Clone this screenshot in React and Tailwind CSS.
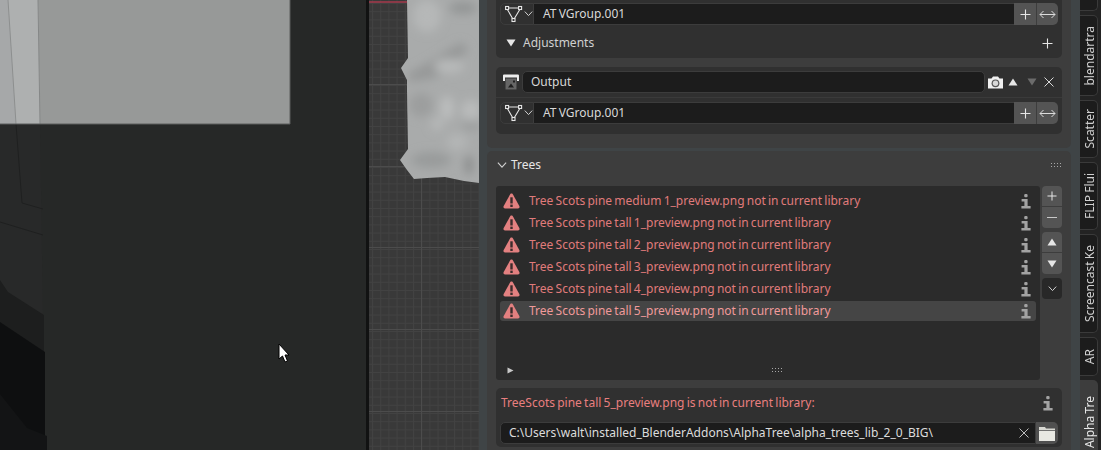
import React from 'react';

const rows = [
  'Tree Scots pine medium 1_preview.png not in current library',
  'Tree Scots pine tall 1_preview.png not in current library',
  'Tree Scots pine tall 2_preview.png not in current library',
  'Tree Scots pine tall 3_preview.png not in current library',
  'Tree Scots pine tall 4_preview.png not in current library',
  'Tree Scots pine tall 5_preview.png not in current library',
];

const tabs = [
  { label: 'blendartra', h: 'h-[81px]' },
  { label: 'Scatter', h: 'h-[58px]' },
  { label: 'FLIP Flui', h: 'h-[68px]' },
  { label: 'Screencast Ke', h: 'h-[99px]' },
  { label: 'AR', h: 'h-[39px]' },
];

const WarnIcon = () => (
  <svg width="17" height="16" viewBox="0 0 17 16">
    <path d="M8.5 .6 C9.3 .6 9.7 1 10.1 1.7 L16.3 13 C16.9 14.2 16.3 15.4 15 15.4 L2 15.4 C.7 15.4 .1 14.2 .7 13 L6.9 1.7 C7.3 1 7.7 .6 8.5 .6 Z" fill="#e38080" />
    <rect x="7.3" y="4.3" width="2.4" height="6.2" fill="#3a2c2c" />
    <rect x="7.3" y="11.6" width="2.4" height="2.4" fill="#3a2c2c" />
  </svg>
);

const InfoIcon = ({ className = '' }) => (
  <svg width="10" height="15" viewBox="0 0 10 15" className={className}>
    <rect x="3.2" y="0" width="3.4" height="3.2" rx="1.2" fill="#a3a3a3" />
    <path d="M.6 5 H6.6 V12 H9.6 V14.6 H.4 V12 H3.4 V7.4 H.6 Z" fill="#a3a3a3" />
  </svg>
);

const VGroupIcon = () => (
  <svg width="18" height="18" viewBox="0 0 18 18" fill="none" stroke="#e6e6e6" strokeWidth="1.1">
    <rect x=".6" y="1.5" width="3" height="3" />
    <rect x="13.6" y="1.5" width="3" height="3" />
    <rect x="7" y="13.5" width="3" height="3" />
    <path d="M3.6 3 H13.6 M2.4 4.5 L7.6 13.5 M14.8 4.5 L9.4 13.5" />
  </svg>
);

const Chevron = ({ color = '#d0d0d0', size = 9 }) => (
  <svg width={size} height={size * 0.6} viewBox="0 0 9 5.4" fill="none" stroke={color} strokeWidth="1">
    <path d="M.8 .6 L4.5 4.6 L8.2 .6" />
  </svg>
);

const Plus = ({ size = 11 }) => (
  <svg width={size} height={size} viewBox="0 0 11 11" stroke="#e6e6e6" strokeWidth="1.1">
    <path d="M5.5 .5 V10.5 M.5 5.5 H10.5" />
  </svg>
);

const Arrows = () => (
  <svg width="17" height="9" viewBox="0 0 17 9" fill="none" stroke="#dcdcdc" strokeWidth="1">
    <path d="M1 4.5 H16 M4.5 1 L1 4.5 L4.5 8 M12.5 1 L16 4.5 L12.5 8" />
  </svg>
);

const Tri = ({ down, color = '#e6e6e6' }) => (
  <svg width="10" height="8" viewBox="0 0 10 8">
    <path d={down ? 'M.5 .5 H9.5 L5 7.5 Z' : 'M5 .5 L9.5 7.5 H.5 Z'} fill={color} />
  </svg>
);

const Close = ({ size = 10, color = '#d8d8d8' }) => (
  <svg width={size} height={size} viewBox="0 0 10 10" stroke={color} strokeWidth="1">
    <path d="M.5 .5 L9.5 9.5 M9.5 .5 L.5 9.5" />
  </svg>
);

const Grip = () => (
  <svg width="11" height="5" viewBox="0 0 11 5" fill="#a8a8a8">
    {[0, 3, 6, 9].map((x) => (
      <g key={x}>
        <rect x={x} y="0" width="1" height="1" />
        <rect x={x} y="3" width="1" height="1" />
      </g>
    ))}
  </svg>
);

const CameraIcon = () => (
  <svg width="15" height="13" viewBox="0 0 15 13">
    <path d="M0 2.5 H3.5 L5 .5 H10 L11.5 2.5 H15 V12.5 H0 Z" fill="#f0f0f0" />
    <circle cx="7.5" cy="7.3" r="3.9" fill="#555" />
    <circle cx="7.5" cy="7.3" r="2.7" fill="#d8d8d8" />
  </svg>
);

const OutputIcon = () => (
  <svg width="16" height="16" viewBox="0 0 16 16">
    <path d="M0 1.5 Q0 .5 1 .5 H15 Q16 .5 16 1.5 V7 H14 V3.5 H2 V7 H0 Z" fill="#eeeeee" />
    <rect x="2.5" y="4.5" width="11" height="11" fill="#666666" />
    <path d="M5 13.5 L8 9.5 L11 13.5 Z" fill="#1f1f1f" />
    <rect x="10" y="6.5" width="2" height="2" fill="#1f1f1f" />
  </svg>
);

const FolderIcon = () => (
  <svg width="16" height="15" viewBox="0 0 16 15">
    <path d="M0 1 H6 L7 2.5 H16 V4.2 H0 Z" fill="#d8d8d2" />
    <rect x="0" y="5" width="16" height="10" fill="#e8e8e2" />
  </svg>
);

// one object picker row, same in both vertex group slots
const GroupRow = () => (
  <div className="flex h-[22px] items-stretch text-[#d8d8d8]">
    <div className="flex w-[34px] items-center gap-[1px] rounded-l-[5px] border border-[#3c3c3c] bg-[#303030] pl-[4px]">
      <VGroupIcon />
      <Chevron />
    </div>
    <div className="flex flex-1 items-center border-y border-[#3c3c3c] bg-[#1c1c1c] pl-[9px]">AT VGroup.001</div>
    <div className="flex w-[22px] items-center justify-center bg-[#545454]"><Plus /></div>
    <div className="flex w-[22px] items-center justify-center rounded-r-[5px] border-l border-[#3d3d3d] bg-[#545454]"><Arrows /></div>
  </div>
);

const ListRow = ({ text, active }) => (
  <div className={`flex shrink-0 items-center ${active ? 'my-[1px] h-[20px] rounded-[3px] bg-[#454545]' : 'h-[22px]'}`}>
    <div className="ml-[3px] mr-[9px] flex w-[17px] justify-center"><WarnIcon /></div>
    <span className={`flex-1 ${active ? 'text-[#f09a9a]' : 'text-[#e07b7b]'}`}>{text}</span>
    <InfoIcon className="mr-[5px]" />
  </div>
);

const SideButton = ({ children, top, bottom, dark }) => (
  <div className={`flex h-[21px] w-[20px] items-center justify-center ${dark ? 'bg-[#282828]' : 'bg-[#545454]'} ${top ? 'rounded-t-[4px]' : ''} ${bottom ? 'rounded-b-[4px]' : ''} ${top && !dark ? 'border-b border-[#3d3d3d]' : ''}`}>
    {children}
  </div>
);

const Viewport = () => (
  <svg width="366" height="450" viewBox="0 0 366 450" className="shrink-0">
    <rect width="366" height="450" fill="#262827" />
    <path d="M0 124 H40 L45 450 H0 Z" fill="#282929" />
    <path d="M0 280 L8 292 L44 315 V450 H0 Z" fill="#1d1e1e" />
    <path d="M0 322 L45 352 V450 H0 Z" fill="#0e0f10" />
    <path d="M0 394 L27 428 L47 436 V450 H0 Z" fill="#131415" />
    <rect width="290" height="124" fill="#979998" />
    <path d="M0 0 H38 L40 124 H0 Z" fill="#a6a8a9" />
    <path d="M8 0 H38 L40 124 H16 Z" fill="#aeb0b0" />
    <path d="M8 0 L16 124" stroke="#8d8f8f" strokeWidth="1" />
    <path d="M16 124 L22 203 L43 209 M0 222 L43 235" fill="none" stroke="#1f2020" strokeWidth="1" />
    <path d="M38 0 L40 124" stroke="#868888" strokeWidth="1" />
    <path d="M290 0 V124 H0" fill="none" stroke="#5a5c5c" strokeWidth="1" />
    <path d="M279 344 V359 L282.5 356 L285 362 L287.5 361 L285 355 L289 355 Z" fill="#fff" stroke="#000" strokeWidth="1" />
  </svg>
);

const GridView = () => (
  <svg width="110" height="450" viewBox="0 0 110 450" className="shrink-0">
    <defs>
      <pattern id="fine" width="8.2" height="8.2" patternUnits="userSpaceOnUse" x="3" y="3">
        <rect width="8.2" height="8.2" fill="#393939" />
        <path d="M0 .5 H8.2 M.5 0 V8.2" stroke="#424242" strokeWidth="1" />
      </pattern>
      <filter id="soft" x="-30%" y="-30%" width="160%" height="160%">
        <feGaussianBlur stdDeviation="5" />
      </filter>
      <clipPath id="rock">
        <path d="M38 0 H110 V183 L95 181 L76 177 L58 178 L45 179 L38 170 L31 160 L39 149 L38 90 L38 80 L32 68 L39 58 Z" />
      </clipPath>
    </defs>
    <rect width="110" height="450" fill="url(#fine)" />
    <path d="M0 84.5 H110 M0 166.5 H110 M0 247.5 H110 M0 329.5 H110 M0 411.5 H110 M52.5 0 V450" stroke="#4c4c4c" strokeWidth="1" />
    <path d="M0 2 H38" stroke="#a63a4c" strokeWidth="1.5" />
    <g clipPath="url(#rock)">
      <rect width="110" height="190" fill="#a9abab" />
      <g filter="url(#soft)">
        <ellipse cx="58" cy="16" rx="14" ry="16" fill="#b6b8b8" />
        <ellipse cx="94" cy="8" rx="14" ry="6" fill="#939595" />
        <path d="M38 74 L60 62 L92 42 L100 50 L66 78 L42 82 Z" fill="#979999" />
        <ellipse cx="80" cy="66" rx="15" ry="7" fill="#b8baba" />
        <ellipse cx="52" cy="105" rx="12" ry="12" fill="#9c9e9e" />
        <ellipse cx="78" cy="108" rx="7" ry="12" fill="#bbbdbd" />
        <ellipse cx="102" cy="110" rx="10" ry="10" fill="#b9bbbb" />
        <ellipse cx="68" cy="124" rx="6" ry="6" fill="#b8baba" />
        <ellipse cx="102" cy="126" rx="10" ry="3" fill="#959797" />
        <ellipse cx="62" cy="160" rx="20" ry="8" fill="#999b9b" />
        <ellipse cx="88" cy="142" rx="10" ry="8" fill="#b4b6b6" />
        <ellipse cx="100" cy="165" rx="4" ry="10" fill="#888a8a" />
      </g>
    </g>
  </svg>
);

const App = () => (
  <div className="flex h-[450px] w-[1101px] overflow-hidden bg-[#262827] font-['Noto_Sans',sans-serif] text-[12px] [word-spacing:-0.9px]">
    <Viewport />
    <div className="w-[3px] shrink-0 bg-[#111212]" />
    <GridView />

    {/* sidebar */}
    <div className="flex h-[450px] w-[601px] shrink-0 flex-col bg-[#3f4446] pl-[8px] pr-[9px]">
      <div className="h-[148px] shrink-0 rounded-b-[5px] bg-[#3d3d3d] px-[9px]">
        <div className="h-[58px] rounded-b-[5px] bg-[#303030] px-[4px] pt-[3px]">
          <GroupRow />
          <div className="flex h-[36px] items-center pl-[6px] pr-[5px] text-[#d0d0d0]">
            <Tri down />
            <span className="ml-[7px] flex-1">Adjustments</span>
            <Plus />
          </div>
        </div>
        <div className="mt-[9px] h-[67px] rounded-[5px] bg-[#303030]">
          <div className="flex h-[31px] items-center border-b border-[#3a3a3a] pl-[7px] pr-[8px]">
            <OutputIcon />
            <div className="ml-[3px] flex h-[22px] w-[464px] items-center rounded-[5px] border border-[#3c3c3c] bg-[#1c1c1c] pl-[8px] text-[#d8d8d8]">Output</div>
            <div className="ml-[3px]"><CameraIcon /></div>
            <div className="ml-[5px]"><Tri /></div>
            <div className="ml-[9px]"><Tri down color="#6b6b6b" /></div>
            <div className="ml-[7px]"><Close /></div>
          </div>
          <div className="px-[4px] pt-[4px]"><GroupRow /></div>
        </div>
      </div>

      <div className="mt-[3px] min-h-0 flex-1 rounded-t-[5px] bg-[#3d3d3d] px-[9px]">
        <div className="flex h-[27px] items-center pl-[1px] pt-[1px] text-[#e6e6e6]">
          <Chevron size={10} />
          <span className="ml-[4px] flex-1">Trees</span>
          <Grip />
        </div>
        <div className="mt-[8px] flex gap-[2px]">
          <div className="flex h-[194px] w-[544px] flex-col rounded-[3px] bg-[#2b2b2b] px-[4px] pt-[4px]">
            {rows.map((text, i) => <ListRow key={text} text={text} active={i === 5} />)}
            <div className="mt-auto flex h-[20px] items-center pl-[7px]">
              <svg width="7" height="7" viewBox="0 0 7 7"><path d="M.5 .5 L6.5 3.5 L.5 6.5 Z" fill="#c8c8c8" /></svg>
              <div className="ml-[258px]"><Grip /></div>
            </div>
          </div>
          <div className="flex w-[20px] flex-col">
            <SideButton top><Plus size={10} /></SideButton>
            <SideButton bottom><svg width="10" height="2" stroke="#c8c8c8"><path d="M0 .5 H10" /></svg></SideButton>
            <div className="h-[4px]" />
            <SideButton top><Tri /></SideButton>
            <SideButton bottom><Tri down /></SideButton>
            <div className="h-[4px]" />
            <SideButton top bottom dark><Chevron /></SideButton>
          </div>
        </div>
        <div className="mt-[8px] h-[59px] rounded-[5px] bg-[#303030] px-[4px]">
          <div className="flex h-[30px] items-center pl-[1px] pr-[5px] text-[#e97f7f]">
            <span className="flex-1">TreeScots pine tall 5_preview.png is not in current library:</span>
            <InfoIcon />
          </div>
          <div className="mt-[4px] flex h-[22px] items-stretch">
            <div className="flex flex-1 items-center rounded-l-[5px] border border-[#3c3c3c] bg-[#1c1c1c] pl-[8px] pr-[6px] text-[#dcdcdc]">
              <span className="flex-1">C:\Users\walt\installed_BlenderAddons\AlphaTree\alpha_trees_lib_2_0_BIG\</span>
              <Close color="#bdbdbd" />
            </div>
            <div className="flex w-[22px] items-center justify-center rounded-r-[5px] bg-[#505050]"><FolderIcon /></div>
          </div>
        </div>
      </div>
    </div>

    {/* vertical tabs */}
    <div className="flex w-[21px] shrink-0 flex-col gap-[4px] bg-[#232323] pr-[3px] text-[#d0d0d0]">
      <div className="h-[11px] shrink-0 rounded-br-[5px] border-b border-r border-[#3a3a3a] bg-[#1c1c1c]" />
      {tabs.map((t) => (
        <div key={t.label} className={`flex ${t.h} shrink-0 items-center justify-center overflow-hidden rounded-r-[5px] border-y border-r border-[#3a3a3a] bg-[#1c1c1c] pl-[2px]`}>
          <span className="rotate-180 whitespace-nowrap [writing-mode:vertical-rl]">{t.label}</span>
        </div>
      ))}
      <div className="flex min-h-0 flex-1 items-start justify-center rounded-tr-[5px] bg-[#3d3d3d] pl-[2px] pt-[16px] text-[#e6e6e6]">
        <span className="rotate-180 whitespace-nowrap [writing-mode:vertical-rl]">Alpha Tre</span>
      </div>
    </div>
  </div>
);

export default App;
